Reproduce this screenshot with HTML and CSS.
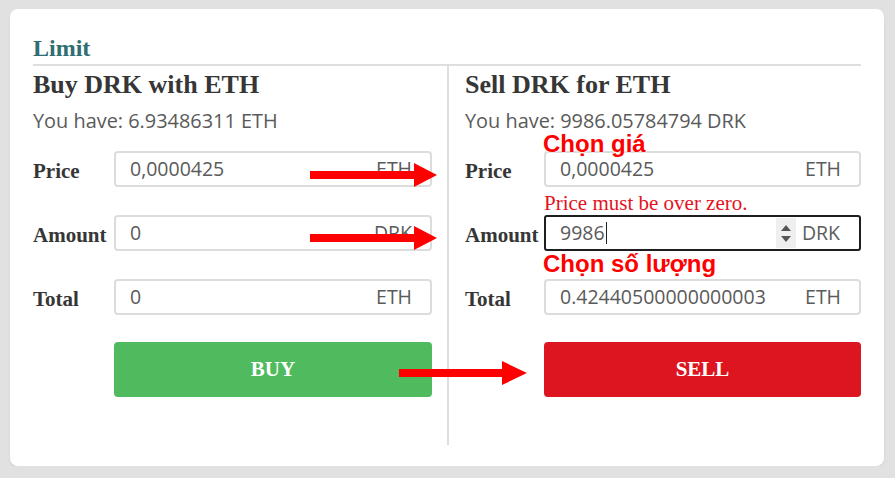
FILE: index.html
```html
<!DOCTYPE html>
<html lang="vi">
<head>
<meta charset="utf-8">
<title>Limit</title>
<link rel="stylesheet" href="styles.css">
</head>
<body>
<div class="card">
  <h3 class="title">Limit</h3>
  <div class="cols">
    <section class="col col-buy">
      <h4 class="col-head">Buy DRK with ETH</h4>
      <p class="have">You have: 6.93486311 ETH</p>
      <div class="row row-first">
        <span class="label">Price</span>
        <div class="field"><span class="val">0,0000425</span><span class="unit">ETH</span></div>
      </div>
      <div class="row">
        <span class="label">Amount</span>
        <div class="field"><span class="val">0</span><span class="unit">DRK</span></div>
      </div>
      <div class="row">
        <span class="label">Total</span>
        <div class="field"><span class="val">0</span><span class="unit">ETH</span></div>
      </div>
      <div class="row btn-row">
        <span class="label"></span>
        <button class="btn btn-buy">BUY</button>
      </div>
    </section>
    <section class="col col-sell">
      <h4 class="col-head">Sell DRK for ETH</h4>
      <p class="have">You have: 9986.05784794 DRK</p>
      <div class="row row-first">
        <span class="label">Price</span>
        <div class="field"><span class="val">0,0000425</span><span class="unit">ETH</span>
          <span class="note note-price">Chọn giá</span>
          <span class="error">Price must be over zero.</span>
        </div>
      </div>
      <div class="row">
        <span class="label">Amount</span>
        <div class="field field-focus"><span class="val">9986<span class="caret"></span></span><span class="spin"><span class="tri-up"></span><span class="tri-down"></span></span><span class="unit">DRK</span>
          <span class="note note-amount">Chọn số lượng</span>
        </div>
      </div>
      <div class="row">
        <span class="label">Total</span>
        <div class="field"><span class="val">0.42440500000000003</span><span class="unit">ETH</span></div>
      </div>
      <div class="row btn-row">
        <span class="label"></span>
        <button class="btn btn-sell">SELL</button>
      </div>
    </section>
  </div>
  <svg class="arrows" width="874" height="457" viewBox="0 0 874 457">
    <polygon points="300,162 404,162 404,154 427,166 404,178 404,170 300,170" fill="#ff0000"/>
    <polygon points="300,225 404,225 404,217 427,229 404,241 404,233 300,233" fill="#ff0000"/>
    <polygon points="389,360 492,360 492,352 517,364 492,376 492,368 389,368" fill="#ff0000"/>
  </svg>
</div>
</body>
</html>
```
FILE: styles.css
```css
html, body {
  margin: 0;
  padding: 0;
  background: #e1e1e1;
}
body {
  padding: 9px 0 0 10px;
  font-family: "Open Sans", "Noto Sans", sans-serif;
}
.card {
  position: relative;
  box-sizing: border-box;
  width: 874px;
  height: 457px;
  background: #fff;
  border-radius: 8px;
  padding: 27px 23px 0 23px;
  box-shadow: 0 2px 3px rgba(0,0,0,0.06);
}
.title {
  margin: 0;
  font-family: "Liberation Serif", serif;
  font-weight: bold;
  font-size: 24px;
  line-height: 24px;
  color: #2f6e73;
  padding-bottom: 4px;
  border-bottom: 2px solid #dedede;
}
.cols {
  display: grid;
  grid-template-columns: 416px 412px;
}
.col {
  height: 379px;
}
.col-buy {
  border-right: 2px solid #dedede;
  padding-right: 15px;
}
.col-sell {
  padding-left: 16px;
}
.col-head {
  margin: 4px 0 0 0;
  font-family: "Liberation Serif", serif;
  font-weight: bold;
  font-size: 26px;
  line-height: 30px;
  color: #363636;
}
.have {
  margin: 8px 0 0 0;
  font-size: 19.9px;
  line-height: 26px;
  color: #5a5a5a;
}
.row {
  display: flex;
  margin-top: 28px;
}
.row-first {
  margin-top: 17px;
}
.label {
  flex: 0 0 auto;
  width: 81px;
  height: 36px;
  box-sizing: border-box;
  padding-top: 5px;
  font-family: "Liberation Serif", serif;
  font-weight: bold;
  font-size: 21px;
  line-height: 31px;
  color: #363636;
}
.col-sell .label {
  width: 79px;
}
.field {
  position: relative;
  flex: 1;
  display: flex;
  align-items: center;
  box-sizing: border-box;
  height: 36px;
  border: 2px solid #dcdcdc;
  border-radius: 4px;
  padding: 0 18px 0 14px;
  font-size: 19.5px;
  line-height: 32px;
  color: #5a5a5a;
}
.val {
  flex: 1;
  display: flex;
  align-items: center;
}
.unit {
  flex: 0 0 auto;
}
.field-focus {
  border-color: #1e1e1e;
  border-radius: 3px;
  padding-right: 19px;
}
.caret {
  display: inline-block;
  width: 1px;
  height: 22px;
  background: #222;
  margin-left: 1px;
}
.spin {
  display: flex;
  flex-direction: column;
  justify-content: center;
  align-items: center;
  gap: 5px;
  width: 20px;
  height: 30px;
  background: #efefef;
  margin-right: 6px;
}
.tri-up, .tri-down {
  width: 0;
  height: 0;
  border-left: 5px solid transparent;
  border-right: 5px solid transparent;
}
.tri-up {
  border-bottom: 6px solid #555;
}
.tri-down {
  border-top: 6px solid #555;
}
.note {
  position: absolute;
  left: -3px;
  font-family: "Liberation Sans", Arial, sans-serif;
  font-weight: bold;
  font-size: 24px;
  line-height: 14px;
  color: #ff0000;
  white-space: nowrap;
  text-shadow: 0 0 2px #fff, 0 0 2px #fff;
}
.note-price {
  top: -16px;
}
.note-amount {
  top: 40px;
}
.error {
  position: absolute;
  left: -2px;
  top: 40px;
  font-family: "Liberation Serif", serif;
  font-size: 21px;
  line-height: 21px;
  color: #e3141c;
  white-space: nowrap;
}
.btn-row {
  margin-top: 27px;
}
.btn {
  flex: 1;
  height: 55px;
  border: none;
  border-radius: 4px;
  font-family: "Liberation Serif", serif;
  font-weight: bold;
  font-size: 21px;
  color: #fff;
  padding: 0;
}
.btn-buy {
  background: #4fba5e;
}
.btn-sell {
  background: #dc1520;
}
.arrows {
  position: absolute;
  top: 0;
  left: 0;
  pointer-events: none;
}
```
